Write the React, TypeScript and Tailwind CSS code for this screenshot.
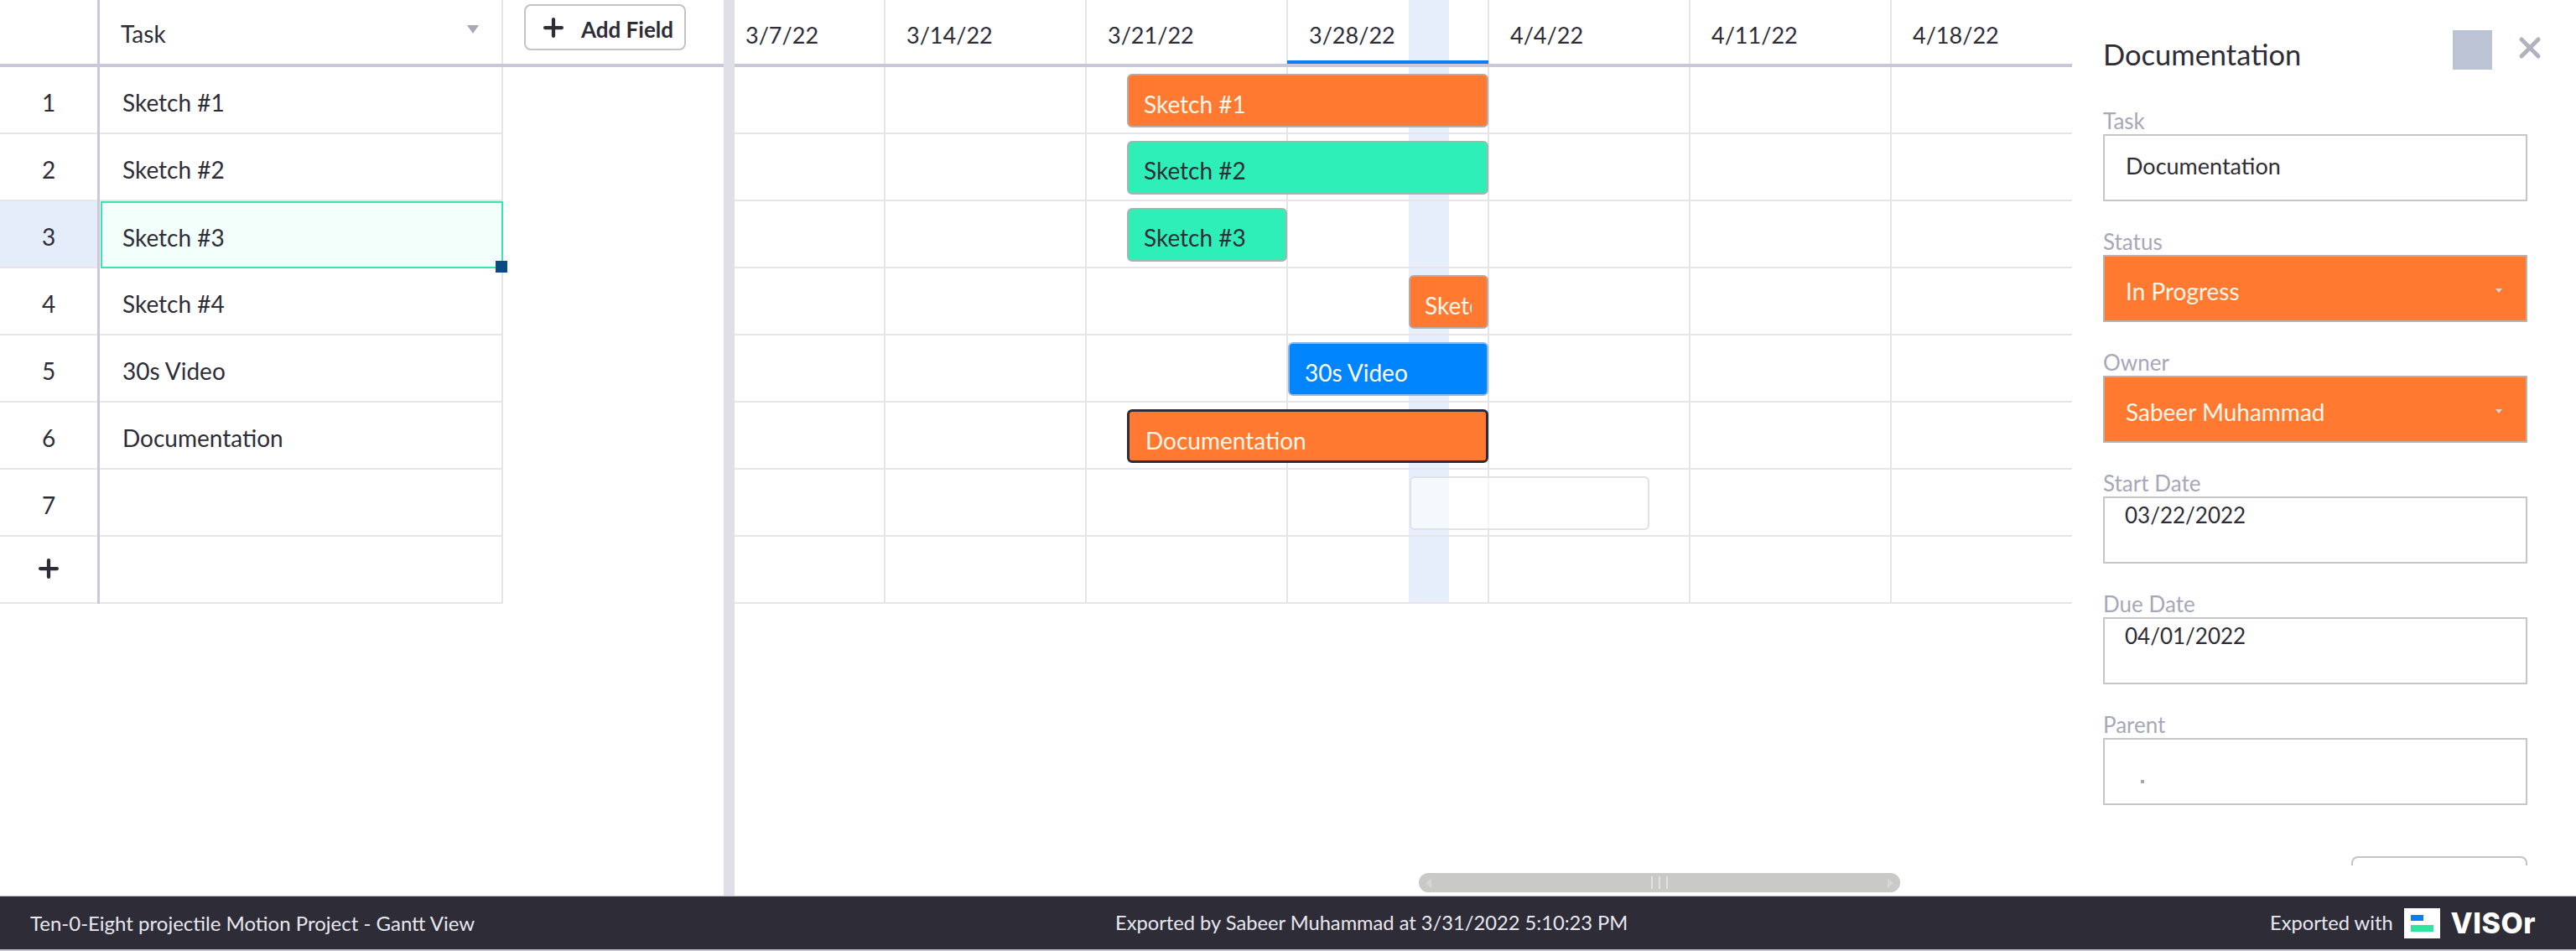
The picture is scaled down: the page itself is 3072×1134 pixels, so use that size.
import { Plus, X } from 'lucide-react';

const rows = ['Sketch #1', 'Sketch #2', 'Sketch #3', 'Sketch #4', '30s Video', 'Documentation', ''];
const dates = ['3/14/22', '3/21/22', '3/28/22', '4/4/22', '4/11/22', '4/18/22'];

function TaskRow({ num, label, selected }: { num: React.ReactNode; label?: string; selected?: boolean }) {
  return (
    <div className="flex h-[80px]">
      <div className={`flex w-[116px] items-center justify-center border-b-2 border-[#e6e6ea] pt-[6px] ${selected ? 'bg-[#e6edfa]' : ''}`}>
        {num}
      </div>
      <div className="w-[3px] bg-[#c9c9da]" />
      {selected ? (
        <div className="relative ml-[1px] flex h-[80px] w-[480px] items-center border-2 border-[#38e6ae] bg-[#f3fffb] pl-[24px] pt-[6px]">
          {label}
          <div className="absolute right-[-7px] bottom-[-7px] h-[14px] w-[14px] bg-[#0c4a85]" />
        </div>
      ) : (
        <div className="flex w-[481px] items-center border-r-2 border-b-2 border-[#e6e6ea] pl-[27px] pt-[6px]">{label}</div>
      )}
    </div>
  );
}

function Field({ label, children }: { label: string; children: React.ReactNode }) {
  return (
    <div className="mb-[32px]">
      <div className="h-[32px] text-[26px] leading-[32px] text-[#a6a8b8]">{label}</div>
      {children}
    </div>
  );
}

function DateInput({ value }: { value: string }) {
  return <div className="h-[80px] border-2 border-[#c6c6c6] px-[24px] pt-[1px] text-[26px]">{value}</div>;
}

function Select({ value }: { value: string }) {
  return (
    <div className="flex h-[80px] items-center justify-between border-2 border-[#b9b4ae] bg-[#ff7a30] pr-[28px] pl-[25px] pt-[5px] text-[#fff6ea]">
      {value}
      <div className="h-0 w-0 border-x-[4px] border-t-[5px] border-x-transparent border-t-[#d9d4cc]" />
    </div>
  );
}

export default function App() {
  return (
    <div className="flex h-[1134px] w-[3072px] flex-col overflow-hidden bg-white font-[Lato,sans-serif] text-[28px] text-[#2e2d37]">
      <div className="flex h-[1068px]">
        {/* task table */}
        <div className="w-[863px]">
          <div className="flex h-[80px] border-b-4 border-[#c8c8d9]">
            <div className="w-[116px]" />
            <div className="w-[3px] bg-[#c9c9da]" />
            <div className="flex w-[481px] items-center justify-between border-r-2 border-[#e6e6ea] pr-[27px] pl-[25px]">
              <span className="pt-[4px]">Task</span>
              <div className="mb-[6px] h-0 w-0 border-x-[7px] border-t-[10px] border-x-transparent border-t-[#a9a9b6]" />
            </div>
            <div className="pt-[5px] pl-[25px]">
              <div className="flex h-[55px] w-[193px] items-center rounded-lg border-2 border-[#c4c4c8] pl-[20px] text-[26px] font-bold">
                <Plus size={34} strokeWidth={3} className="mr-[16px] ml-[-4px] shrink-0" />
                <span className="pt-[5px]">Add Field</span>
              </div>
            </div>
          </div>
          {rows.map((r, i) => (
            <TaskRow key={i} num={i + 1} label={r} selected={i === 2} />
          ))}
          <TaskRow num={<Plus size={34} strokeWidth={3} className="mt-[-8px]" />} />
        </div>

        <div className="w-[13px] bg-[#dfdfe8]" />

        {/* gantt */}
        <div className="relative w-[1595px]">
          <div className="absolute top-0 left-[804px] h-[719px] w-[48px] bg-[#e6eefb]" />
          <div className="absolute top-[72px] left-[659px] z-10 h-[4px] w-[240px] bg-[#0a7ff5]" />
          <div className="relative flex h-[80px] border-b-4 border-[#c8c8d9] text-[27px]">
            <div className="w-[180px] border-r-2 border-[#e6e6ea] pl-[13px] pt-[22px]">3/7/22</div>
            {dates.map((d) => (
              <div key={d} className="w-[240px] border-r-2 border-[#e6e6ea] pl-[25px] pt-[22px] last:w-[215px] last:border-r-0">
                {d}
              </div>
            ))}
          </div>
          {Array.from({ length: 8 }).map((_, i) => (
            <div key={i} className="relative flex h-[80px] border-b-2 border-[#e6e6ea]">
              <div className="w-[180px] border-r-2 border-[#e6e6ea]" />
              {dates.map((d) => (
                <div key={d} className="w-[240px] border-r-2 border-[#e6e6ea] last:w-[215px] last:border-r-0" />
              ))}
            </div>
          ))}

          <div className="absolute top-[88px] left-[468px] flex h-[64px] w-[431px] items-center rounded-md border-2 border-[#b4aca8] bg-[#ff7a30] pl-[18px] pt-[7px] text-[#fff6ea]">Sketch #1</div>
          <div className="absolute top-[168px] left-[468px] flex h-[64px] w-[431px] items-center rounded-md border-2 border-[#a8b4b0] bg-[#2eefb7] pl-[18px] pt-[6px]">Sketch #2</div>
          <div className="absolute top-[248px] left-[468px] flex h-[64px] w-[191px] items-center rounded-md border-2 border-[#a8b4b0] bg-[#2eefb7] pl-[18px] pt-[6px]">Sketch #3</div>
          <div className="absolute top-[328px] left-[804px] flex h-[64px] w-[95px] items-center rounded-md border-2 border-[#b4aca8] bg-[#ff7a30] pt-[7px] pr-[18px] pl-[17px] text-[#fff6ea]">
            <span className="overflow-hidden whitespace-nowrap">Sketch #4</span>
          </div>
          <div className="absolute top-[408px] left-[660px] flex h-[64px] w-[239px] items-center rounded-md border-2 border-[#8cb8e8] bg-[#0085ff] pl-[18px] pt-[7px] text-white">30s Video</div>
          <div className="absolute top-[488px] left-[468px] flex h-[64px] w-[431px] items-center rounded-md border-[3px] border-[#2e2d37] bg-[#ff7a30] pl-[19px] pt-[10px] text-[#fff6ea]">Documentation</div>
          <div className="absolute top-[568px] left-[805px] h-[64px] w-[286px] rounded-md border-2 border-[#e0e2e8] bg-white/60" />

          <div className="absolute top-[1041px] left-[816px] flex h-[23px] w-[574px] items-center justify-between rounded-full bg-[#c9c9c5] px-[8px]">
            <div className="h-0 w-0 border-y-[6px] border-r-[7px] border-y-transparent border-r-[#d6d6d3]" />
            <div className="flex gap-[7px]">
              <div className="h-[15px] w-[2px] bg-[#e2e2df]" />
              <div className="h-[15px] w-[2px] bg-[#e2e2df]" />
              <div className="h-[15px] w-[2px] bg-[#e2e2df]" />
            </div>
            <div className="h-0 w-0 border-y-[6px] border-l-[7px] border-y-transparent border-l-[#d6d6d3]" />
          </div>
        </div>

        {/* detail panel */}
        <div className="flex h-[1032px] w-[601px] flex-col overflow-hidden pr-[58px] pl-[37px]">
          <div className="flex h-[128px] shrink-0 items-start">
            <div className="mt-[42px] flex-1 text-[34.5px] leading-[46px]">Documentation</div>
            <div className="mt-[36px] h-[47px] w-[47px] bg-[#bcc3d4]" />
            <X size={40} strokeWidth={3} className="mt-[37px] mr-[-23px] ml-[25px] text-[#aeb3bf]" />
          </div>
          <Field label="Task">
            <div className="flex h-[80px] items-center border-2 border-[#c6c6c6] px-[25px] pb-[3px] text-[27px]">Documentation</div>
          </Field>
          <Field label="Status"><Select value="In Progress" /></Field>
          <Field label="Owner"><Select value="Sabeer Muhammad" /></Field>
          <Field label="Start Date"><DateInput value="03/22/2022" /></Field>
          <Field label="Due Date"><DateInput value="04/01/2022" /></Field>
          <Field label="Parent">
            <div className="flex h-[80px] items-end border-2 border-[#c6c6c6] pb-[24px] pl-[43px]">
              <div className="h-[4px] w-[4px] bg-[#a8a8a8]" />
            </div>
          </Field>
          <div className="mt-[29px] h-[60px] w-[210px] shrink-0 self-end rounded-lg border-2 border-[#c4c4c8]" />
        </div>
      </div>

      {/* export footer */}
      <div className="flex h-[66px] items-center border-t border-b-2 border-t-[#bdbdc4] border-b-[#c8c8d4] bg-[#2e2d37] pr-[48px] pl-[36px] text-[23.7px] text-[#e8e8f0]">
        <span className="w-[1294px] text-[24px]">Ten-0-Eight projectile Motion Project - Gantt View</span>
        <span>Exported by Sabeer Muhammad at 3/31/2022 5:10:23 PM</span>
        <div className="ml-auto flex items-center">
          <span>Exported with</span>
          <div className="ml-[13px] flex h-[36px] w-[43px] flex-col justify-between bg-white px-[8px] py-[8px]">
            <div className="h-[7px] w-[15px] bg-[#0a7ff5]" />
            <div className="h-[8px] w-[27px] bg-[#2ee59d]" />
          </div>
          <span className="ml-[13px] font-[Inter,sans-serif] text-[34px] leading-[36px] font-extrabold tracking-[0.5px] text-white">
            <span className="uppercase">viso</span>r
          </span>
        </div>
      </div>
    </div>
  );
}
